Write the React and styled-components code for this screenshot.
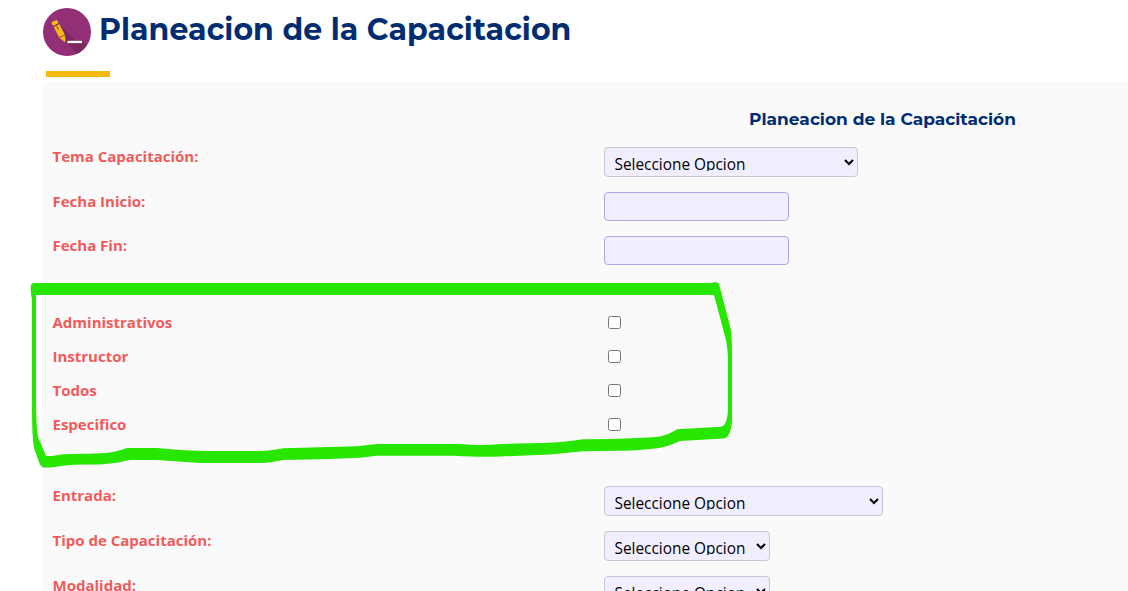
import React from "react";
import styled, { createGlobalStyle } from "styled-components";

const GlobalStyle = createGlobalStyle`
  * { box-sizing: border-box; }
  body {
    margin: 0;
    background: #fff;
    font-family: "Open Sans", "Noto Sans", sans-serif;
    overflow: hidden;
  }
`;

const Page = styled.div`
  position: relative;
  height: 591px;
  overflow: hidden;
  padding-left: 43px;
`;

const Header = styled.header`
  display: flex;
  align-items: flex-start;
  gap: 8px;
  height: 71px;
  padding-top: 8px;
`;

const Logo = styled.svg`
  flex: none;
  width: 48px;
  height: 48px;
`;

const Title = styled.h1`
  margin: 0;
  color: #002d72;
  font: 700 30px/44px Montserrat, Inter, sans-serif;
  letter-spacing: 0.04px;
  white-space: nowrap;
`;

const Accent = styled.div`
  width: 64px;
  height: 6px;
  margin: 0 0 5px 3px;
  background: #f5b80e;
`;

const Panel = styled.main`
  width: 1128px;
  height: 509px;
  padding: 26px 10px 0 9.5px;
  background: #fafafa;
`;

const SectionTitle = styled.h2`
  margin: 0 0 17px 551.5px;
  width: 557px;
  color: #002d72;
  font: 700 17px/22px Montserrat, Inter, sans-serif;
  text-align: center;
`;

const Group = styled.section`
  margin-bottom: ${(p) => p.$gap}px;
`;

const Row = styled.div`
  display: grid;
  grid-template-columns: 551.5px 1fr;
  align-items: start;
  height: ${(p) => p.$height}px;
`;

const Label = styled.label`
  color: #f25a5a;
  font-size: 15px;
  font-weight: 700;
  line-height: ${(p) => (p.$compact ? 20 : 18)}px;
`;

const Select = styled.select`
  width: ${(p) => p.$width}px;
  height: 30px;
  padding: 5px 6px 5px 5.5px;
  border: 1px solid #c8c6d4;
  border-radius: 4px;
  background: #f0eeff;
  color: #000;
  font: 400 15.4px "Open Sans", "Noto Sans", sans-serif;
`;

const DateInput = styled.input`
  width: 185px;
  height: 29px;
  padding: 5px 9px;
  border: 1px solid #aea8e6;
  border-radius: 4px;
  background: #f0eeff;
  font: 15px "Open Sans", "Noto Sans", sans-serif;
`;

const Checkbox = styled.input`
  width: 13px;
  height: 13px;
  margin: 4px 0 0 4px;
`;

const Marker = styled.svg`
  position: absolute;
  left: 0;
  top: 0;
  width: 760px;
  height: 480px;
  pointer-events: none;
`;

const audiences = ["Administrativos", "Instructor", "Todos", "Especifico"];

function SelectRow({ label, width }) {
  return (
    <Row $height={45}>
      <Label>{label}</Label>
      <Select $width={width}>
        <option>Seleccione Opcion</option>
      </Select>
    </Row>
  );
}

function DateRow({ label }) {
  return (
    <Row $height={44}>
      <Label>{label}</Label>
      <DateInput type="text" />
    </Row>
  );
}

function PencilLogo() {
  return (
    <Logo viewBox="0 0 48 48" aria-hidden="true">
      <defs>
        <clipPath id="disc">
          <circle cx="24" cy="24" r="24" />
        </clipPath>
      </defs>
      <circle cx="24" cy="24" r="24" fill="#932f76" />
      <path clipPath="url(#disc)" d="M16 16L33 33H39L48 42 38 50 22 33Z" fill="#7a285f" />
      <g transform="translate(11.3 13.5) rotate(-28)">
        <rect x="-3.2" y="-0.6" width="6.4" height="4.2" rx="1.4" fill="#f6b51a" />
        <rect x="-3.2" y="4.3" width="6.4" height="12.2" fill="#f6b51a" />
        <path d="M-3.2 17H3.2L.5 23H-.5Z" fill="#f6b51a" />
        <path d="M0 5V9" stroke="#57314c" strokeWidth="0.8" />
        <path d="M-3.2 4H3.2" stroke="#57314c" strokeWidth="0.9" />
        <path d="M-3.2 16.8H3.2" stroke="#a9602e" strokeWidth="0.7" />
      </g>
      <rect x="24.5" y="32.8" width="14.5" height="2.3" fill="#fff" />
    </Logo>
  );
}

export default function App() {
  return (
    <Page>
      <GlobalStyle />
      <Header>
        <PencilLogo />
        <Title>Planeacion de la Capacitacion</Title>
      </Header>
      <Accent />
      <Panel>
        <SectionTitle>Planeacion de la Capacitación</SectionTitle>
        <Group $gap={32}>
          <SelectRow label="Tema Capacitación:" width={254} />
          <DateRow label="Fecha Inicio:" />
          <DateRow label="Fecha Fin:" />
        </Group>
        <Group $gap={38}>
          {audiences.map((name) => (
            <Row key={name} $height={34}>
              <Label $compact>{name}</Label>
              <Checkbox type="checkbox" />
            </Row>
          ))}
        </Group>
        <Group $gap={0}>
          <SelectRow label="Entrada:" width={279} />
          <SelectRow label="Tipo de Capacitación:" width={166} />
          <SelectRow label="Modalidad:" width={166} />
        </Group>
      </Panel>
      <Marker viewBox="0 0 760 480" aria-hidden="true">
        <path
          fill="#27e600"
          fillRule="evenodd"
          d="M33 283H711Q718 281 719 284L731 330Q732 340 732 352V420Q731 438 723 438.5L680 441C670 445 665 448 650 449Q635 451 620 450.7L583 451.3 550 454.5 500 456.5Q483 457.5 453 455.7H377L360 457.7 330 459 283 460Q268 463 262 463H200L157 460H130Q115 464 100 464.5Q75 464 63 465.7Q50 468 43 467.5Q40 466 39 462L34 448Q32 436 32 410V300Q30 291 31 285Z
          M36 295H714L726 340Q728 350 728 360V410Q727 426 721 426.8L677 429.3C668 435 662 437 648 437.5L613 439 583 439.3Q565 442 550 442.7L500 444Q483 446 460 444H377L357 446.3 283 448.3Q268 451 262 451H207Q187 451 157 448H127C112 453 108 453 90 453.7Q72 453.5 63 454.3Q50 457 46 455.7L38 437Q36 425 36 400Z"
        />
      </Marker>
    </Page>
  );
}
